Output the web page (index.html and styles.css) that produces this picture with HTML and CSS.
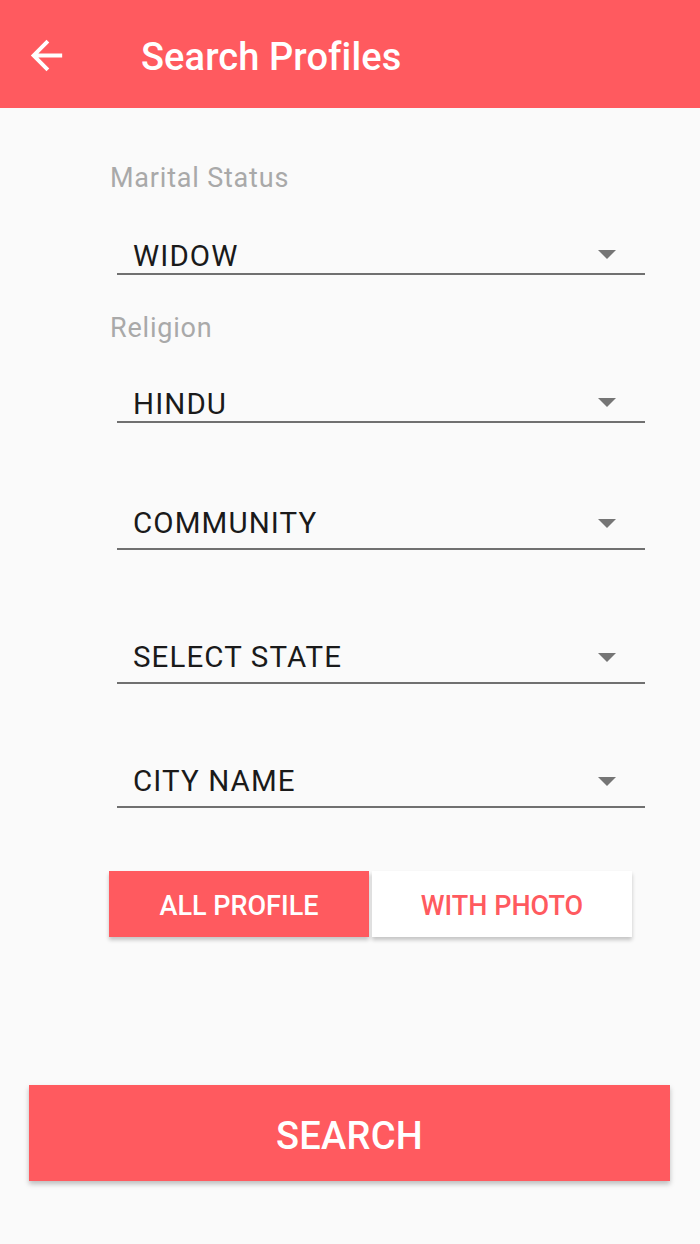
FILE: index.html
```html
<!DOCTYPE html>
<html>
<head>
<meta charset="utf-8">
<title>Search Profiles</title>
<link rel="stylesheet" href="styles.css">
</head>
<body>
<div class="app">
  <header class="toolbar">
    <span class="back">
      <svg viewBox="0 0 24 24" width="47" height="47"><path fill="#fff" d="M20 11H7.83l5.59-5.59L12 4l-8 8 8 8 1.41-1.41L7.83 13H20v-2z"/></svg>
    </span>
    <h1 class="title">Search Profiles</h1>
  </header>

  <main class="form">
    <div class="label label-marital">Marital Status</div>
    <div class="spinner sp-widow"><span class="value">WIDOW</span><span class="caret"></span></div>

    <div class="label label-religion">Religion</div>
    <div class="spinner sp-hindu"><span class="value">HINDU</span><span class="caret"></span></div>

    <div class="spinner spinner-tall sp-community"><span class="value">COMMUNITY</span><span class="caret"></span></div>

    <div class="spinner spinner-tall sp-state"><span class="value">SELECT STATE</span><span class="caret"></span></div>

    <div class="spinner spinner-tall sp-city"><span class="value">CITY NAME</span><span class="caret"></span></div>

    <div class="toggle">
      <button class="tbtn tbtn-active">ALL PROFILE</button>
      <button class="tbtn tbtn-plain">WITH PHOTO</button>
    </div>
  </main>

  <div class="search-wrap">
    <button class="search">SEARCH</button>
  </div>
</div>
</body>
</html>
```

FILE: styles.css
```css
* { box-sizing: border-box; }
html, body {
  margin: 0;
  padding: 0;
  background: #fafafa;
  font-family: Roboto, "Noto Sans", "Liberation Sans", sans-serif;
}
.app {
  width: 700px;
  height: 1244px;
  display: flex;
  flex-direction: column;
  background: #fafafa;
}
.toolbar {
  height: 108px;
  background: #ff5a5f;
  display: flex;
  align-items: center;
  flex-shrink: 0;
}
.back {
  width: 47px;
  height: 47px;
  margin-left: 23px;
  margin-top: 2px;
  display: flex;
}
.title {
  margin: 6px 0 0 71px;
  font-size: 38px;
  font-weight: 500;
  color: #fff;
  line-height: 50px;
  letter-spacing: 0.1px;
}
.form {
  display: flex;
  flex-direction: column;
  padding-left: 109px;
}
.label {
  font-size: 27px;
  line-height: 36px;
  color: #a9a9a9;
  margin-left: 1px;
  letter-spacing: 0.8px;
}
.label-marital { margin-top: 52px; }
.label-religion { margin-top: 35px; }
.spinner {
  width: 528px;
  margin-left: 8px;
  display: flex;
  align-items: flex-start;
  justify-content: space-between;
  border-bottom: 2px solid #707070;
}
.spinner-tall { padding-bottom: 6px; }
.value {
  font-size: 29.5px;
  line-height: 38px;
  color: #1a1a1a;
  padding-left: 16px;
  letter-spacing: 1.1px;
}
.caret {
  width: 0;
  height: 0;
  border-left: 9.5px solid transparent;
  border-right: 9.5px solid transparent;
  border-top: 9px solid #757575;
  margin-right: 29px;
  margin-top: 15px;
}
.sp-widow { margin-top: 39px; padding-top: 2px; height: 40px; }
.sp-widow .caret, .sp-hindu .caret { margin-top: 13px; }
.sp-hindu { margin-top: 37px; padding-top: 2px; height: 40px; }
.sp-community { margin-top: 81px; }
.sp-state { margin-top: 88px; }
.sp-city { margin-top: 78px; }
.toggle {
  margin-top: 63px;
  display: flex;
  gap: 3px;
}
.tbtn {
  width: 260px;
  height: 66px;
  border: none;
  font-family: Roboto, "Noto Sans", "Liberation Sans", sans-serif;
  font-size: 27px;
  font-weight: 500;
  padding: 3px 0 0 0;
  box-shadow: 0 3px 4px rgba(0,0,0,0.22);
}
.tbtn-active { background: #ff5a5f; color: #fff; }
.tbtn-plain { background: #fff; color: #ff5a5f; }
.search-wrap {
  margin-top: 148px;
  padding-left: 29px;
}
.search {
  width: 641px;
  height: 96px;
  border: none;
  background: #ff5a5f;
  color: #fff;
  font-family: Roboto, "Noto Sans", "Liberation Sans", sans-serif;
  font-size: 38px;
  font-weight: 500;
  box-shadow: 0 3px 5px rgba(0,0,0,0.25);
  padding: 5px 0 0 0;
  letter-spacing: 0.3px;
}
```
